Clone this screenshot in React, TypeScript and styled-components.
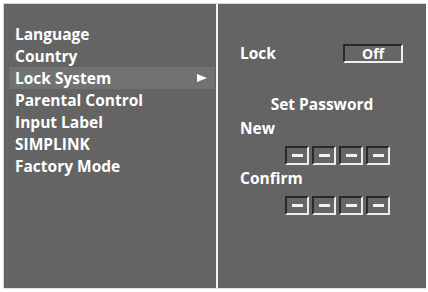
import React, {FC} from 'react';
import styled, {createGlobalStyle} from 'styled-components';

const GlobalStyle = createGlobalStyle`
  html, body {
    margin: 0;
    padding: 0;
    background: #fff;
  }
  body {
    font-family: "Open Sans", "DejaVu Sans", sans-serif;
    font-weight: 700;
  }
`

const menuItems = ['Language', 'Country', 'Lock System', 'Parental Control', 'Input Label', 'SIMPLINK', 'Factory Mode'];

const PinRow: FC = () => (
    <Pins>
        {[0, 1, 2, 3].map(i => (
            <PinBox key={i}><Dash/></PinBox>
        ))}
    </Pins>
);

const App: FC = () => {
    return (
        <>
            <GlobalStyle/>
            <Screen>
                <MenuPanel>
                    {menuItems.map(item => (
                        <MenuItem key={item} active={item === 'Lock System'}>
                            {item}
                            {item === 'Lock System' && <Arrow/>}
                        </MenuItem>
                    ))}
                </MenuPanel>
                <Divider/>
                <DetailPanel>
                    <LockRow>
                        <Label>Lock</Label>
                        <ValueBox>Off</ValueBox>
                    </LockRow>
                    <Title>Set Password</Title>
                    <Label>New</Label>
                    <PinRow/>
                    <Label>Confirm</Label>
                    <PinRow/>
                </DetailPanel>
            </Screen>
        </>
    );
};

export default App;


const Screen = styled.div`
  margin: 3px 0 0 3px;
  width: 423px;
  height: 286px;
  border: 1px solid #d4d4d4;
  border-right: none;
  border-bottom-color: #e4e4e4;
  display: flex;
  box-sizing: border-box;
  background: #646464;
`
const MenuPanel = styled.div`
  width: 211px;
  padding: 19px 0 0 5px;
  display: flex;
  flex-direction: column;
  box-sizing: border-box;
`
const MenuItem = styled.div<{active?: boolean}>`
  height: 22px;
  display: flex;
  align-items: center;
  justify-content: space-between;
  padding: 0 8px 0 6px;
  font-size: 15.5px;
  color: #fff;
  background: ${p => p.active ? '#727272' : 'transparent'};
`
const Arrow = styled.span`
  width: 0;
  height: 0;
  border-left: 10px solid #fff;
  border-top: 4.5px solid transparent;
  border-bottom: 4.5px solid transparent;
`
const Divider = styled.div`
  width: 2px;
  background: #f4f4f4;
  margin-left: 1px;
`
const DetailPanel = styled.div`
  flex: 1;
  display: flex;
  flex-direction: column;
  padding: 38px 0 0 22px;
  box-sizing: border-box;
`
const LockRow = styled.div`
  display: flex;
  align-items: center;
  justify-content: space-between;
  padding-right: 23px;
  height: 22px;
  margin-bottom: 29px;
`
const Label = styled.div`
  font-size: 15.5px;
  color: #fff;
  height: 22px;
  line-height: 22px;
`
const ValueBox = styled.div`
  width: 60px;
  height: 19px;
  box-sizing: border-box;
  border: 2px solid #f0f0f0;
  border-top-color: #2a2a2a;
  border-left-color: #2a2a2a;
  display: flex;
  align-items: center;
  justify-content: center;
  color: #fff;
  font-size: 14px;
  background: #666;
`
const Title = styled.div`
  font-size: 15.5px;
  color: #fff;
  height: 22px;
  line-height: 22px;
  text-align: center;
  margin-left: -22px;
  margin-bottom: 2px;
`
const Pins = styled.div`
  display: flex;
  gap: 3px;
  margin: 7px 0 2px 45px;
`
const PinBox = styled.div`
  width: 24px;
  height: 19px;
  box-sizing: border-box;
  border: 2px solid #ededed;
  border-top-color: #2a2a2a;
  border-left-color: #2a2a2a;
  display: flex;
  align-items: center;
  justify-content: center;
  background: #666;
`
const Dash = styled.div`
  width: 11px;
  height: 3px;
  background: #f2f2f2;
`
